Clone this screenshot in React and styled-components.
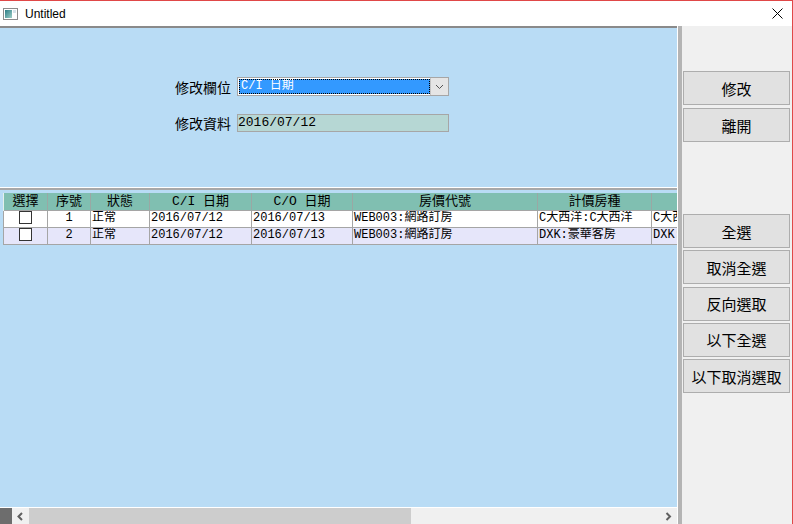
import React from 'react';
import styled, { createGlobalStyle } from 'styled-components';

const mono = `"Liberation Mono", "Noto Sans CJK TC", monospace`;
const cjk = `"Noto Sans CJK TC", sans-serif`;

const GlobalStyle = createGlobalStyle`
	html, body {
		margin: 0;
		padding: 0;
		background: #fff;
	}
	body {
		font-family: "Liberation Sans", Arial, sans-serif;
		overflow: hidden;
	}
	* {
		box-sizing: border-box;
	}
`;

const Window = styled.div`
	width: 793px;
	height: 524px;
	display: flex;
	flex-direction: column;
	border-top: 1px solid #e04848;
	border-right: 1px solid #e04848;
	background: #f0f0f0;
`;

const TitleBar = styled.div`
	height: 25px;
	display: flex;
	align-items: center;
	background: #fff;
	padding-left: 3px;
	padding-right: 9px;
`;

const TitleText = styled.span`
	font-size: 12px;
	color: #000;
	margin-left: 7px;
	flex: 1;
`;

const Body = styled.div`
	flex: 1;
	display: flex;
	min-height: 0;
`;

const LeftPane = styled.div`
	width: 678px;
	display: flex;
	flex-direction: column;
	border-right: 1px solid #fff;
`;

const Splitter = styled.div`
	width: 4px;
	background: #b4b4b4;
`;

const RightPane = styled.div`
	flex: 1;
	background: #f0f0f0;
	display: flex;
	flex-direction: column;
	padding: 45px 0 0 1px;
`;

const TopPanel = styled.div`
	height: 161px;
	border-top: 2px solid #8a8a8a;
	background: #b9dcf5;
	padding: 49px 0 0 175px;
`;

const Form = styled.div`
	display: grid;
	grid-template-columns: auto 212px;
	column-gap: 6px;
	row-gap: 18px;
	justify-content: start;
	align-items: center;
`;

const Label = styled.span`
	font-family: ${cjk};
	font-size: 14px;
	line-height: 18px;
	color: #000;
	text-align: right;
`;

const Select = styled.div`
	display: flex;
	height: 19px;
	border: 1px solid #a6a6a6;
	background: #fff;
	padding: 1px 0 1px 1px;
`;

const SelectValue = styled.div`
	flex: 1;
	background: #3399ff;
	color: #fff;
	outline: 1px dotted #000;
	outline-offset: -1px;
	font-family: ${mono};
	font-size: 12px;
	line-height: 15px;
	padding-left: 2px;
	white-space: pre;
`;

const SelectArrow = styled.div`
	width: 18px;
	margin-top: -1px;
	margin-bottom: -1px;
	background: #e5e5e5;
	border-left: 1px solid #c4c4c4;
	display: flex;
	align-items: center;
	justify-content: center;
`;

const TextBox = styled.div`
	height: 18px;
	border: 1px solid #a6a6a6;
	background: #b6d7d4;
	font-family: ${mono};
	font-size: 13px;
	line-height: 16px;
	color: #000;
	padding-left: 0;
`;

const Separator = styled.div`
	height: 3px;
	border-top: 1px solid #fff;
	background: #a8a8a8;
`;

const GridArea = styled.div`
	flex: 1;
	background: #b9dcf5;
	padding: 3px 0 0 3px;
	overflow: hidden;
	min-height: 0;
`;

const Table = styled.table`
	table-layout: fixed;
	border-collapse: collapse;
	width: 728px;
	font-family: ${mono};
	font-size: 12px;
	color: #000;
`;

const HeadCell = styled.th`
	height: 17px;
	padding: 0;
	background: #80bfb1;
	font-weight: normal;
	font-size: 13px;
	line-height: 15px;
	text-align: center;
	border-left: 1px solid #e4f0ec;
	border-right: 1px solid #9aa8a4;
	white-space: nowrap;
	overflow: hidden;
`;

const Row = styled.tr`
	background: ${(p) => (p.$alt ? '#e6e6fa' : '#fff')};
`;

const Cell = styled.td`
	height: 17px;
	padding: 0 1px;
	border: 1px solid #a5a5a5;
	line-height: 15px;
	text-align: ${(p) => p.$align || 'left'};
	white-space: nowrap;
	overflow: hidden;
`;

const Check = styled.span`
	display: inline-block;
	width: 13px;
	height: 13px;
	border: 1px solid #333;
	background: #fff;
	vertical-align: middle;
`;

const ScrollBar = styled.div`
	height: 17px;
	border-top: 1px solid #fff;
	display: flex;
	background: #f0f0f0;
`;

const ScrollCorner = styled.div`
	width: 12px;
	background: #6d6d6d;
`;

const ScrollArrow = styled.div`
	width: 17px;
	display: flex;
	align-items: center;
	justify-content: center;
`;

const ScrollThumb = styled.div`
	width: 382px;
	background: #cdcdcd;
`;

const ScrollTrack = styled.div`
	flex: 1;
`;

const ButtonGroup = styled.div`
	display: flex;
	flex-direction: column;
	gap: ${(p) => p.$gap}px;
	margin-top: ${(p) => p.$top || 0}px;
`;

const Button = styled.button`
	width: 107px;
	height: 34px;
	margin: 0;
	padding: 0;
	background: #e1e1e1;
	border: 1px solid #adadad;
	font-family: ${cjk};
	font-size: 15px;
	color: #000;
	white-space: nowrap;
`;

const columns = [
	{ w: 44, t: '選擇' },
	{ w: 43, t: '序號' },
	{ w: 59, t: '狀態' },
	{ w: 102, t: 'C/I 日期' },
	{ w: 101, t: 'C/O 日期' },
	{ w: 185, t: '房價代號' },
	{ w: 114, t: '計價房種' },
	{ w: 80, t: '' },
];

const rows = [
	{ no: 1, status: '正常', ci: '2016/07/12', co: '2016/07/13', rate: 'WEB003:網路訂房', room: 'C大西洋:C大西洋', last: 'C大西洋' },
	{ no: 2, status: '正常', ci: '2016/07/12', co: '2016/07/13', rate: 'WEB003:網路訂房', room: 'DXK:豪華客房', last: 'DXK:豪華' },
];

function AppIcon() {
	return (
		<svg width="15" height="12" viewBox="0 0 15 12">
			<defs>
				<linearGradient id="ig" x1="0" y1="0" x2="1" y2="1">
					<stop offset="0" stopColor="#2c7d86" />
					<stop offset="1" stopColor="#9fd0c8" />
				</linearGradient>
			</defs>
			<rect x="0.5" y="0.5" width="14" height="11" fill="#fff" stroke="#8c8c8c" />
			<rect x="2" y="2" width="7" height="8" fill="url(#ig)" />
			<rect x="10" y="2" width="3" height="3" fill="#d6e4ea" />
		</svg>
	);
}

function CloseIcon() {
	return (
		<svg width="11" height="11" viewBox="0 0 11 11">
			<path d="M0.5 0.5 L10.5 10.5 M10.5 0.5 L0.5 10.5" stroke="#000" strokeWidth="1" />
		</svg>
	);
}

function Chevron({ dir }) {
	const d = {
		down: 'M1 1 L4.5 4.5 L8 1',
		left: 'M5 1 L1.5 4.5 L5 8',
		right: 'M1.5 1 L5 4.5 L1.5 8',
	}[dir];
	const size = dir === 'down' ? [9, 6] : [7, 9];
	return (
		<svg width={size[0]} height={size[1]} viewBox={`0 0 ${size[0]} ${size[1]}`}>
			<path d={d} fill="none" stroke={dir === 'down' ? '#555' : '#606060'} strokeWidth={dir === 'down' ? 1 : 2} />
		</svg>
	);
}

function App() {
	return (
		<>
			<GlobalStyle />
			<Window>
				<TitleBar>
					<AppIcon />
					<TitleText>Untitled</TitleText>
					<CloseIcon />
				</TitleBar>
				<Body>
					<LeftPane>
						<TopPanel>
							<Form>
								<Label>修改欄位</Label>
								<Select>
									<SelectValue>C/I 日期</SelectValue>
									<SelectArrow>
										<Chevron dir="down" />
									</SelectArrow>
								</Select>
								<Label>修改資料</Label>
								<TextBox>2016/07/12</TextBox>
							</Form>
						</TopPanel>
						<Separator />
						<GridArea>
							<Table>
								<colgroup>
									{columns.map((c, i) => (
										<col key={i} style={{ width: c.w }} />
									))}
								</colgroup>
								<thead>
									<tr>
										{columns.map((c, i) => (
											<HeadCell key={i}>{c.t}</HeadCell>
										))}
									</tr>
								</thead>
								<tbody>
									{rows.map((r, i) => (
										<Row key={r.no} $alt={i % 2 === 1}>
											<Cell $align="center">
												<Check />
											</Cell>
											<Cell $align="center">{r.no}</Cell>
											<Cell>{r.status}</Cell>
											<Cell>{r.ci}</Cell>
											<Cell>{r.co}</Cell>
											<Cell>{r.rate}</Cell>
											<Cell>{r.room}</Cell>
											<Cell>{r.last}</Cell>
										</Row>
									))}
								</tbody>
							</Table>
						</GridArea>
						<ScrollBar>
							<ScrollCorner />
							<ScrollArrow>
								<Chevron dir="left" />
							</ScrollArrow>
							<ScrollThumb />
							<ScrollTrack />
							<ScrollArrow>
								<Chevron dir="right" />
							</ScrollArrow>
						</ScrollBar>
					</LeftPane>
					<Splitter />
					<RightPane>
						<ButtonGroup $gap={3}>
							<Button>修改</Button>
							<Button>離開</Button>
						</ButtonGroup>
						<ButtonGroup $gap={2.25} $top={72}>
							<Button>全選</Button>
							<Button>取消全選</Button>
							<Button>反向選取</Button>
							<Button>以下全選</Button>
							<Button>以下取消選取</Button>
						</ButtonGroup>
					</RightPane>
				</Body>
			</Window>
		</>
	);
}

export default App;
